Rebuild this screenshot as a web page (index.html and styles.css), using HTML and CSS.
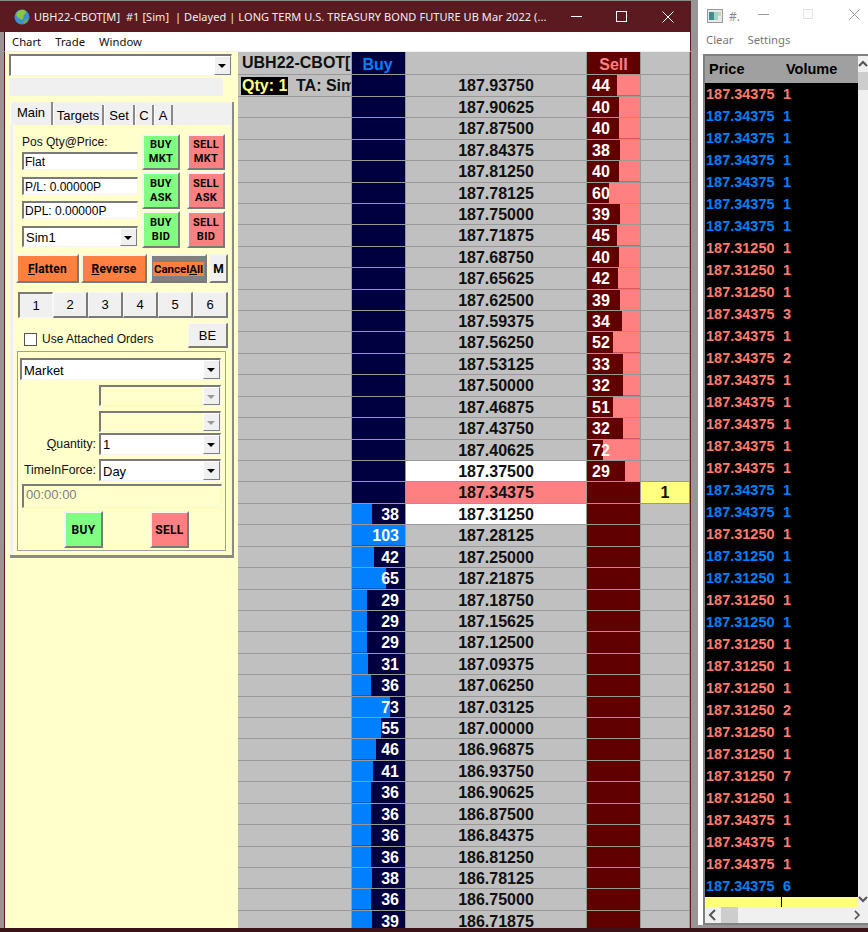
FILE: index.html
```html
<!DOCTYPE html>
<html lang="en">
<head>
<meta charset="utf-8">
<title>UBH22-CBOT[M] Ladder</title>
<link rel="stylesheet" href="styles.css">
</head>
<body>
<div class="desktop">
  <section class="main">
    <header class="titlebar">
      <svg class="globe" width="16" height="16" viewBox="0 0 16 16"><circle cx="8" cy="8" r="7.5" fill="#3f8fd0"/><path d="M3 3.5C5 1 9 0 11 1.500C12.500 3 12 5 10 5.500C9 7 10 9 8.500 10.500C7 11 6 9.500 4.500 9C3 8 1.500 6 3 3.500Z" fill="#8cc63f"/><path d="M10 11c1-1 3-1 4-.5-.8 2-2 3.500-4 4.300C9.500 13.500 9.500 12 10 11Z" fill="#6aa84f"/></svg>
      <span class="title-text">UBH22-CBOT[M]  #1 [Sim]  | Delayed | LONG TERM U.S. TREASURY BOND FUTURE UB Mar 2022 (...</span>
      <svg class="winbtn min" width="11" height="11" viewBox="0 0 11 11"><path d="M0 5.500H11" stroke="#fff"/></svg>
      <svg class="winbtn max" width="11" height="11" viewBox="0 0 11 11"><rect x=".5" y=".5" width="10" height="10" fill="none" stroke="#fff"/></svg>
      <svg class="winbtn close" width="12" height="12" viewBox="0 0 12 12"><path d="M.5.500L11.500 11.500M11.500.500L.5 11.500" stroke="#fff"/></svg>
    </header>
    <nav class="menubar"><span>Chart</span><span>Trade</span><span>Window</span></nav>
    <div class="content">
      <aside class="side">
        <div class="combo big"><span class="combo-val"></span><span class="arrow"></span></div>
        <div class="statusbar"></div>
        <div class="tabbox">
          <div class="tabs">
            <span class="tab active w42">Main</span><span class="tab w50">Targets</span><span class="tab w30">Set</span><span class="tab w18">C</span><span class="tab w18">A</span>
          </div>
          <div class="page">
            <div class="top">
              <div class="fields">
                <label class="lbl">Pos Qty@Price:</label>
                <div class="tb">Flat</div>
                <div class="tb gap8">P/L: 0.00000P</div>
                <div class="tb gap7">DPL: 0.00000P</div>
                <div class="combo sim"><span class="combo-val">Sim1</span><span class="arrow"></span></div>
              </div>
              <button class="btn green">BUY<br>MKT</button>
              <button class="btn pink">SELL<br>MKT</button>
              <button class="btn green">BUY<br>ASK</button>
              <button class="btn pink">SELL<br>ASK</button>
              <button class="btn green">BUY<br>BID</button>
              <button class="btn pink">SELL<br>BID</button>
            </div>
            <div class="actions">
              <button class="btn wide orange w63"><u>F</u>latten</button>
              <button class="btn wide orange w66"><u>R</u>everse</button>
              <button class="btn wide cancel"><span>Cancel<u>A</u>ll</span></button>
              <button class="btn wide plain w19">M</button>
            </div>
            <div class="nums">
              <button class="num sel">1</button><button class="num">2</button><button class="num">3</button><button class="num">4</button><button class="num">5</button><button class="num">6</button>
            </div>
            <div class="attached">
              <span class="check"></span>
              <span class="lbl">Use Attached Orders</span>
              <button class="num be">BE</button>
            </div>
            <div class="group">
              <div class="combo market"><span class="combo-val">Market</span><span class="arrow"></span></div>
              <div class="frow r1"><span></span><div class="combo dis"><span class="combo-val"></span><span class="arrow"></span></div></div>
              <div class="frow r2"><span></span><div class="combo dis"><span class="combo-val"></span><span class="arrow"></span></div></div>
              <div class="frow r3"><span class="lbl right"><u>Q</u>uantity:</span><div class="combo"><span class="combo-val">1</span><span class="arrow"></span></div></div>
              <div class="frow r4"><span class="lbl right">TimeInForce:</span><div class="combo"><span class="combo-val">Day</span><span class="arrow"></span></div></div>
              <div class="time">00:00:00</div>
              <div class="submit">
                <button class="btn green big-btn">BUY</button>
                <button class="btn pink big-btn">SELL</button>
              </div>
            </div>
          </div>
        </div>
      </aside>
      <div class="ladder">
        <div class="row head">
          <div class="cell a head-a"><span class="sym">UBH22-CBOT[</span></div>
          <div class="cell buy-h">Buy</div>
          <div class="cell"></div>
          <div class="cell sell-h">Sell</div>
          <div class="cell"></div>
        </div>
        <div class="row"><div class="cell a info"><span class="qty">Qty: 1</span><span class="ta">TA: Sim</span></div><div class="cell buy"></div><div class="cell px">187.93750</div><div class="cell sell" style="background-size:23px 100%">44</div><div class="cell"></div></div>
        <div class="row"><div class="cell a"></div><div class="cell buy"></div><div class="cell px">187.90625</div><div class="cell sell" style="background-size:21px 100%">40</div><div class="cell"></div></div>
        <div class="row"><div class="cell a"></div><div class="cell buy"></div><div class="cell px">187.87500</div><div class="cell sell" style="background-size:21px 100%">40</div><div class="cell"></div></div>
        <div class="row"><div class="cell a"></div><div class="cell buy"></div><div class="cell px">187.84375</div><div class="cell sell" style="background-size:20px 100%">38</div><div class="cell"></div></div>
        <div class="row"><div class="cell a"></div><div class="cell buy"></div><div class="cell px">187.81250</div><div class="cell sell" style="background-size:21px 100%">40</div><div class="cell"></div></div>
        <div class="row"><div class="cell a"></div><div class="cell buy"></div><div class="cell px">187.78125</div><div class="cell sell" style="background-size:31px 100%">60</div><div class="cell"></div></div>
        <div class="row"><div class="cell a"></div><div class="cell buy"></div><div class="cell px">187.75000</div><div class="cell sell" style="background-size:20px 100%">39</div><div class="cell"></div></div>
        <div class="row"><div class="cell a"></div><div class="cell buy"></div><div class="cell px">187.71875</div><div class="cell sell" style="background-size:23px 100%">45</div><div class="cell"></div></div>
        <div class="row"><div class="cell a"></div><div class="cell buy"></div><div class="cell px">187.68750</div><div class="cell sell" style="background-size:21px 100%">40</div><div class="cell"></div></div>
        <div class="row"><div class="cell a"></div><div class="cell buy"></div><div class="cell px">187.65625</div><div class="cell sell" style="background-size:22px 100%">42</div><div class="cell"></div></div>
        <div class="row"><div class="cell a"></div><div class="cell buy"></div><div class="cell px">187.62500</div><div class="cell sell" style="background-size:20px 100%">39</div><div class="cell"></div></div>
        <div class="row"><div class="cell a"></div><div class="cell buy"></div><div class="cell px">187.59375</div><div class="cell sell" style="background-size:18px 100%">34</div><div class="cell"></div></div>
        <div class="row"><div class="cell a"></div><div class="cell buy"></div><div class="cell px">187.56250</div><div class="cell sell" style="background-size:27px 100%">52</div><div class="cell"></div></div>
        <div class="row"><div class="cell a"></div><div class="cell buy"></div><div class="cell px">187.53125</div><div class="cell sell" style="background-size:17px 100%">33</div><div class="cell"></div></div>
        <div class="row"><div class="cell a"></div><div class="cell buy"></div><div class="cell px">187.50000</div><div class="cell sell" style="background-size:17px 100%">32</div><div class="cell"></div></div>
        <div class="row"><div class="cell a"></div><div class="cell buy"></div><div class="cell px">187.46875</div><div class="cell sell" style="background-size:27px 100%">51</div><div class="cell"></div></div>
        <div class="row"><div class="cell a"></div><div class="cell buy"></div><div class="cell px">187.43750</div><div class="cell sell" style="background-size:17px 100%">32</div><div class="cell"></div></div>
        <div class="row"><div class="cell a"></div><div class="cell buy"></div><div class="cell px">187.40625</div><div class="cell sell" style="background-size:37px 100%">72</div><div class="cell"></div></div>
        <div class="row"><div class="cell a"></div><div class="cell buy"></div><div class="cell px white">187.37500</div><div class="cell sell" style="background-size:15px 100%">29</div><div class="cell"></div></div>
        <div class="row"><div class="cell a"></div><div class="cell buy"></div><div class="cell px last">187.34375</div><div class="cell sell"></div><div class="cell pos">1</div></div>
        <div class="row"><div class="cell a"></div><div class="cell buy" style="background-size:20px 100%">38</div><div class="cell px white">187.31250</div><div class="cell sell"></div><div class="cell"></div></div>
        <div class="row"><div class="cell a"></div><div class="cell buy" style="background-size:54px 100%">103</div><div class="cell px">187.28125</div><div class="cell sell"></div><div class="cell"></div></div>
        <div class="row"><div class="cell a"></div><div class="cell buy" style="background-size:22px 100%">42</div><div class="cell px">187.25000</div><div class="cell sell"></div><div class="cell"></div></div>
        <div class="row"><div class="cell a"></div><div class="cell buy" style="background-size:34px 100%">65</div><div class="cell px">187.21875</div><div class="cell sell"></div><div class="cell"></div></div>
        <div class="row"><div class="cell a"></div><div class="cell buy" style="background-size:15px 100%">29</div><div class="cell px">187.18750</div><div class="cell sell"></div><div class="cell"></div></div>
        <div class="row"><div class="cell a"></div><div class="cell buy" style="background-size:15px 100%">29</div><div class="cell px">187.15625</div><div class="cell sell"></div><div class="cell"></div></div>
        <div class="row"><div class="cell a"></div><div class="cell buy" style="background-size:15px 100%">29</div><div class="cell px">187.12500</div><div class="cell sell"></div><div class="cell"></div></div>
        <div class="row"><div class="cell a"></div><div class="cell buy" style="background-size:16px 100%">31</div><div class="cell px">187.09375</div><div class="cell sell"></div><div class="cell"></div></div>
        <div class="row"><div class="cell a"></div><div class="cell buy" style="background-size:19px 100%">36</div><div class="cell px">187.06250</div><div class="cell sell"></div><div class="cell"></div></div>
        <div class="row"><div class="cell a"></div><div class="cell buy" style="background-size:38px 100%">73</div><div class="cell px">187.03125</div><div class="cell sell"></div><div class="cell"></div></div>
        <div class="row"><div class="cell a"></div><div class="cell buy" style="background-size:29px 100%">55</div><div class="cell px">187.00000</div><div class="cell sell"></div><div class="cell"></div></div>
        <div class="row"><div class="cell a"></div><div class="cell buy" style="background-size:24px 100%">46</div><div class="cell px">186.96875</div><div class="cell sell"></div><div class="cell"></div></div>
        <div class="row"><div class="cell a"></div><div class="cell buy" style="background-size:21px 100%">41</div><div class="cell px">186.93750</div><div class="cell sell"></div><div class="cell"></div></div>
        <div class="row"><div class="cell a"></div><div class="cell buy" style="background-size:19px 100%">36</div><div class="cell px">186.90625</div><div class="cell sell"></div><div class="cell"></div></div>
        <div class="row"><div class="cell a"></div><div class="cell buy" style="background-size:19px 100%">36</div><div class="cell px">186.87500</div><div class="cell sell"></div><div class="cell"></div></div>
        <div class="row"><div class="cell a"></div><div class="cell buy" style="background-size:19px 100%">36</div><div class="cell px">186.84375</div><div class="cell sell"></div><div class="cell"></div></div>
        <div class="row"><div class="cell a"></div><div class="cell buy" style="background-size:19px 100%">36</div><div class="cell px">186.81250</div><div class="cell sell"></div><div class="cell"></div></div>
        <div class="row"><div class="cell a"></div><div class="cell buy" style="background-size:20px 100%">38</div><div class="cell px">186.78125</div><div class="cell sell"></div><div class="cell"></div></div>
        <div class="row"><div class="cell a"></div><div class="cell buy" style="background-size:19px 100%">36</div><div class="cell px">186.75000</div><div class="cell sell"></div><div class="cell"></div></div>
        <div class="row"><div class="cell a"></div><div class="cell buy" style="background-size:20px 100%">39</div><div class="cell px">186.71875</div><div class="cell sell"></div><div class="cell"></div></div>
      </div>
    </div>
  </section>
  <section class="tape">
    <header class="tape-title">
      <svg class="tape-icon" width="16" height="14" viewBox="0 0 16 14"><rect x=".5" y=".5" width="15" height="13" fill="#e8e8e8" stroke="#9a9a9a"/><rect x="2" y="3" width="5" height="8" fill="#3f8f8f"/><rect x="7" y="3" width="4" height="8" fill="#a8d0c8"/><rect x="11" y="3" width="3" height="4" fill="#c8d8a8"/></svg>
      <span class="tape-name">#.</span>
      <svg class="tw min2" width="11" height="11" viewBox="0 0 11 11"><path d="M0 5.500H11" stroke="#999"/></svg>
      <svg class="tw max2" width="10" height="10" viewBox="0 0 10 10"><rect x=".5" y=".5" width="9" height="9" fill="none" stroke="#e4e4e4"/></svg>
      <svg class="tw close2" width="11" height="11" viewBox="0 0 11 11"><path d="M.5.500L10.500 10.500M10.500.500L.5 10.500" stroke="#999"/></svg>
    </header>
    <nav class="tape-menu"><span>Clear</span><span>Settings</span></nav>
    <div class="tape-box">
      <div class="tape-top">
        <div class="tape-list">
          <div class="t-head"><span>Price</span><span>Volume</span></div>
          <div class="t s"><span>187.34375</span><span>1</span></div>
          <div class="t b"><span>187.34375</span><span>1</span></div>
          <div class="t b"><span>187.34375</span><span>1</span></div>
          <div class="t b"><span>187.34375</span><span>1</span></div>
          <div class="t b"><span>187.34375</span><span>1</span></div>
          <div class="t b"><span>187.34375</span><span>1</span></div>
          <div class="t b"><span>187.34375</span><span>1</span></div>
          <div class="t s"><span>187.31250</span><span>1</span></div>
          <div class="t s"><span>187.31250</span><span>1</span></div>
          <div class="t s"><span>187.31250</span><span>1</span></div>
          <div class="t s"><span>187.34375</span><span>3</span></div>
          <div class="t s"><span>187.34375</span><span>1</span></div>
          <div class="t s"><span>187.34375</span><span>2</span></div>
          <div class="t s"><span>187.34375</span><span>1</span></div>
          <div class="t s"><span>187.34375</span><span>1</span></div>
          <div class="t s"><span>187.34375</span><span>1</span></div>
          <div class="t s"><span>187.34375</span><span>1</span></div>
          <div class="t s"><span>187.34375</span><span>1</span></div>
          <div class="t b"><span>187.34375</span><span>1</span></div>
          <div class="t b"><span>187.34375</span><span>1</span></div>
          <div class="t s"><span>187.31250</span><span>1</span></div>
          <div class="t b"><span>187.31250</span><span>1</span></div>
          <div class="t b"><span>187.31250</span><span>1</span></div>
          <div class="t s"><span>187.31250</span><span>1</span></div>
          <div class="t b"><span>187.31250</span><span>1</span></div>
          <div class="t s"><span>187.31250</span><span>1</span></div>
          <div class="t s"><span>187.31250</span><span>1</span></div>
          <div class="t s"><span>187.31250</span><span>1</span></div>
          <div class="t s"><span>187.31250</span><span>2</span></div>
          <div class="t s"><span>187.31250</span><span>1</span></div>
          <div class="t s"><span>187.31250</span><span>1</span></div>
          <div class="t s"><span>187.31250</span><span>7</span></div>
          <div class="t s"><span>187.31250</span><span>1</span></div>
          <div class="t s"><span>187.34375</span><span>1</span></div>
          <div class="t s"><span>187.34375</span><span>1</span></div>
          <div class="t s"><span>187.34375</span><span>1</span></div>
          <div class="t b"><span>187.34375</span><span>6</span></div>
          <div class="t-foot"><i></i></div>
        </div>
        <div class="vscroll">
          <svg class="sb-arrow" width="10" height="16" viewBox="0 0 10 16"><path d="M1 10L5 6L9 10" fill="none" stroke="#555" stroke-width="2"/></svg>
          <div class="vthumb"></div>
          <svg class="sb-arrow down" width="10" height="16" viewBox="0 0 10 16"><path d="M1 6L5 10L9 6" fill="none" stroke="#555" stroke-width="2"/></svg>
        </div>
      </div>
      <div class="hscroll">
        <svg class="sb-h" width="16" height="16" viewBox="0 0 16 16"><path d="M10 3L5 8L10 13" fill="none" stroke="#555" stroke-width="2"/></svg>
        <div class="hthumb"></div>
        <svg class="sb-h right" width="16" height="16" viewBox="0 0 16 16"><path d="M6 3L11 8L6 13" fill="none" stroke="#555" stroke-width="2"/></svg>
        <div class="corner"></div>
      </div>
    </div>
  </section>
</div>
<div class="bottom-band"></div>
</body>
</html>
```
FILE: styles.css
```css
* { box-sizing: border-box; }
html, body { margin: 0; height: 932px; overflow: hidden; }
body { background: #969696; font: 12px/1.2 "Liberation Sans", Arial, sans-serif; color: #000; }
.desktop { display: flex; height: 928px; }
.bottom-band { height: 4px; background: #3a1218; }
button { font-family: inherit; padding: 0; margin: 0; cursor: default; }

/* main window */
.main { width: 691px; flex: none; display: flex; flex-direction: column; }
.titlebar { height: 32px; flex: none; background: #5a1a20; border-top: 1px solid #8a8a8a; display: flex; align-items: center; position: relative; padding-left: 14px; color: #fff; }
.globe { flex: none; margin-right: 4px; }
.title-text { font: 11px "Noto Sans", sans-serif; letter-spacing: .07px; white-space: pre; color: #f4eeee; }
.winbtn { position: absolute; top: 10px; }
.winbtn.min { left: 571px; }
.winbtn.max { left: 616px; }
.winbtn.close { left: 662px; }
.menubar { height: 20px; flex: none; margin-left: 4px; background: #fff; border-left: 1px solid #3a1218; border-right: 1px solid #5a1a20; border-bottom: 1px solid #f0f0f0; display: flex; gap: 14px; padding-left: 7px; align-items: center; font: 11.300px "Noto Sans", sans-serif; color: #111; }
.content { flex: 1; min-height: 0; display: flex; margin-left: 4px; border-left: 1px solid #5a1a20; border-right: 1px solid #5a1a20; overflow: hidden; }

/* side panel */
.side { width: 233px; flex: none; background: #ffffcc; padding: 2px 0 0 4px; }
.combo { height: 22px; display: flex; border-style: solid; border-width: 2px 1px 1px 2px; border-color: #7a7a7a #f4f4f4 #f4f4f4 #7a7a7a; background: #fff; }
.combo-val { flex: 1; padding: 2px 0 0 2px; font-size: 13px; white-space: nowrap; overflow: hidden; }
.market .combo-val, .r4 .combo-val { padding-top: 3px; }
.arrow { width: 17px; flex: none; background: #f0f0f0; border: 1px solid; border-color: #fff #808080 #808080 #fff; position: relative; }
.arrow::after { content: ""; position: absolute; left: 3px; top: 7px; border: 4.500px solid transparent; border-top: 4.500px solid #000; border-bottom: 0; }
.combo.big { width: 223px; }
.statusbar { width: 214px; height: 18px; margin-top: 2px; background: #f0f0f0; }
.tabbox { width: 224px; margin: 6px 0 0 1px; height: 456px; background: #f0f0f0; border-right: 2px solid #8a8a8a; border-bottom: 3px solid #8a8a8a; }
.tabs { height: 23px; display: flex; align-items: flex-end; }
.tab { height: 20px; padding-top: 3px; text-align: center; background: #f0f0f0; font-size: 13px; border-right: 2px solid #8a8a8a; border-left: 1px solid #fff; }
.tab.active { height: 23px; padding-top: 3px; }
.w42 { width: 43px; }
.w50 { width: 51px; }
.w30 { width: 31px; }
.w18 { width: 19px; }
.page { margin: 0 1px 0 3px; height: 430px; background: #ffffcc; padding-top: 9px; }
.top { display: grid; grid-template-columns: 120px 45px 38px; grid-template-rows: 36px 37px 37px; row-gap: 2px; padding-left: 9px; }
.top .btn { width: 38px; }
.fields { grid-row: 1 / 4; width: 116px; display: flex; flex-direction: column; }
.lbl { font-size: 12px; color: #111; }
.fields .lbl { height: 18px; padding-top: 1px; }
.tb { height: 18px; background: #fff; border-style: solid; border-width: 2px 1px 1px 2px; border-color: #7a7a7a #f4f4f4 #f4f4f4 #7a7a7a; font-size: 12px; line-height: 16px; padding-left: 1px; white-space: nowrap; }
.gap8 { margin-top: 7px; }
.gap7 { margin-top: 6px; }
.combo.sim { margin-top: 7px; height: 21px; }
.btn { border-style: solid; border-width: 2px; border-color: #f4f4f4 #7a7a7a #7a7a7a #f4f4f4; font: bold 11px/14px Roboto, "Liberation Sans", sans-serif; color: #000; letter-spacing: .3px; }
.green { background: #80ff80; }
.pink { background: #ff8080; }
.actions { display: flex; height: 29px; margin: 6px 0 0 3px; gap: 2px; }
.wide { font-size: 12px; letter-spacing: .2px; }
.orange { background: #ff8040; }
.w63 { width: 63px; }
.w66 { width: 66px; }
.w19 { width: 19px; background: #f0f0f0; }
.cancel { width: 57px; margin-left: 1px; background: #808080; padding: 0; }
.cancel span { display: block; background: #ff8040; margin: 0 1px; line-height: 14px; letter-spacing: 0; font-size: 11.500px; white-space: nowrap; }
.nums { display: flex; margin: 9px 0 0 5px; height: 26px; }
.num { width: 35px; height: 26px; background: #f0f0f0; border-style: solid; border-width: 1px 2px 2px 1px; border-color: #f8f8f8 #7a7a7a #7a7a7a #f8f8f8; font: 13px "Liberation Sans", sans-serif; color: #000; }
.num.sel { border-color: #7a7a7a #f8f8f8 #f8f8f8 #7a7a7a; border-width: 2px 1px 1px 2px; }
.attached { display: flex; align-items: center; height: 25px; margin: 5px 0 0 11px; }
.check { width: 13px; height: 13px; background: #fff; border: 1px solid #555; margin: 8px 5px 0 0; }
.attached .lbl { margin-top: 8px; }
.be { width: 40px; height: 25px; margin-left: auto; margin-right: 3px; font-size: 13px; }
.group { width: 209px; height: 200px; margin: 3px 0 0 4px; border: 1px solid #a0a0a0; padding: 6px 4px 0 2px; }
.combo.market { width: 201px; }
.frow { display: grid; grid-template-columns: 79px 122px; align-items: center; }
.r1 { margin-top: 5px; height: 21px; }
.r2 { margin-top: 5px; height: 21px; }
.r3 { margin-top: 1px; height: 22px; }
.r4 { margin-top: 4px; height: 22px; }
.right { text-align: right; padding-right: 3px; font-size: 12.300px; white-space: nowrap; }
.combo.dis { height: 21px; background: #ffffcc; }
.dis .arrow::after { border-top-color: #999; }
.frow .combo { width: 122px; }
.time { width: 200px; height: 24px; margin: 3px 0 0 2px; background: #ffffcc; border-style: solid; border-width: 2px 1px 1px 2px; border-color: #7a7a7a #f4f4f4 #f4f4f4 #7a7a7a; color: #808080; font-size: 13px; line-height: 18px; padding-left: 2px; }
.submit { display: flex; gap: 47px; margin: 3px 0 0 44px; }
.big-btn { width: 39px; height: 37px; font-size: 12px; }

/* ladder */
.ladder { flex: 1; min-width: 0; background: #c0c0c0; font: bold 16px/21px "Liberation Sans", Arial, sans-serif; }
.row { display: grid; grid-template-columns: 113px 53px 180px 53px 48px; column-gap: 1px; height: 21.430px; padding-bottom: 1px; background: #999; }
.row.head { height: 23.400px; }
.cell { background: #c0c0c0; min-width: 0; overflow: hidden; white-space: nowrap; }
.head-a { padding: 1px 0 0 4px; line-height: 20px; }
.sym { color: #111; }
.buy-h { background: #000040; color: #0080ff; text-align: center; padding: 4px 2px 0 0; line-height: 18px; }
.sell-h { background: #600000; color: #ff8080; text-align: center; padding-top: 4px; line-height: 18px; }
.info { display: flex; align-items: center; padding-left: 3px; }
.qty { background: #000; color: #ffff80; padding: 0 1px; height: 18px; line-height: 18px; width: 47px; white-space: nowrap; }
.ta { margin-left: 8px; color: #111; }
.buy { background: #000040 linear-gradient(#0080ff, #0080ff) no-repeat left / 0 100%; color: #fff; text-align: right; padding-right: 6px; }
.sell { background: #600000 linear-gradient(#ff8080, #ff8080) no-repeat right / 0 100%; color: #fff; padding-left: 5px; }
.px { text-align: center; color: #111; }
.white { background: #fff; }
.last { background: #ff8080; }
.pos { background: #ffff80; text-align: center; color: #111; }

/* time and sales */
.tape { flex: 1; margin-left: 7px; background: #fff; height: 925px; min-width: 0; display: flex; flex-direction: column; }
.tape-title { height: 32px; flex: none; position: relative; display: flex; align-items: center; padding-left: 9px; }
.tape-name { margin-left: 6px; font: 12px "Noto Sans", sans-serif; color: #888; }
.tape-icon { flex: none; }
.tw { position: absolute; top: 9px; }
.min2 { left: 60px; }
.max2 { left: 105px; }
.close2 { left: 151px; }
.tape-menu { height: 22px; flex: none; display: flex; gap: 14px; padding: 0 0 8px 8px; align-items: center; font: 11.300px "Noto Sans", sans-serif; color: #777; }
.tape-box { flex: 1; min-height: 0; margin-left: 5px; background: #f0f0f0; border-style: solid; border-width: 2px 0 2px 2px; border-color: #808080; display: flex; flex-direction: column; }
.tape-top { display: flex; height: 851px; }
.tape-list { width: 153px; flex: none; background: #000; font: bold 14.500px/22px "Liberation Sans", Arial, sans-serif; }
.t-head { height: 27px; background: #a0a0a0; color: #000; display: grid; grid-template-columns: 77px 1fr; padding: 0 0 1px 4px; align-items: center; }
.t { display: grid; grid-template-columns: 77px 1fr; padding-left: 1px; height: 22px; white-space: nowrap; }
.s { color: #ff7c72; }
.b { color: #0080ff; }
.t-foot { height: 10px; background: #ffff80; }
.t-foot i { display: block; height: 100%; width: 1px; margin-left: 76px; background: #000; }
.vscroll { flex: 1; background: #f0f0f0; display: flex; flex-direction: column; }
.vthumb { height: 18px; background: #cdcdcd; }
.sb-arrow { display: block; flex: none; }
.sb-arrow.down { margin-top: auto; }
.hscroll { height: 17px; background: #f0f0f0; display: flex; align-items: center; }
.sb-h { flex: none; }
.hthumb { width: 17px; height: 100%; background: #cdcdcd; }
.sb-h.right { margin-left: 112px; margin-right: -1px; }
.corner { flex: 1; }
```
